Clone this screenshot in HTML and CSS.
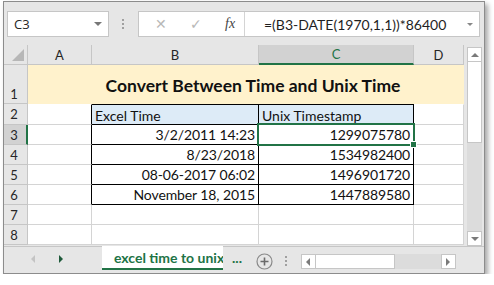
FILE: index.html
```html
<!DOCTYPE html>
<html lang="en">
<head>
    <meta charset="UTF-8">
    <title>excel time to unix</title>
    <link rel="stylesheet" href="styles.css">
</head>
<body>
    <div class="window">
        <div class="formula-bar">
            <div class="name-box">
                <span>C3</span>
                <span class="caret"></span>
            </div>
            <div class="grip"></div>
            <div class="formula-box">
                <div class="fx-buttons">
                    <span class="fx-btn">&#x2715;</span>
                    <span class="fx-btn">&#x2713;</span>
                    <span class="fx-label">fx</span>
                </div>
                <div class="formula">=(B3-DATE(1970,1,1))*86400</div>
                <span class="caret small"></span>
            </div>
        </div>

        <div class="sheet-area">
            <div class="grid">
                <div class="corner"><span class="corner-tri"></span></div>
                <div class="col-head">A</div>
                <div class="col-head">B</div>
                <div class="col-head active">C</div>
                <div class="col-head">D</div>

                <div class="row-head tall">1</div>
                <div class="cell title-fill"></div>
                <div class="cell title">Convert Between Time and Unix Time</div>
                <div class="cell title-fill last"></div>

                <div class="row-head">2</div>
                <div class="cell edge top-line"></div>
                <div class="cell t head top">Excel Time</div>
                <div class="cell t head top">Unix Timestamp</div>
                <div class="cell top-line"></div>

                <div class="row-head active">3</div>
                <div class="cell edge"></div>
                <div class="cell t num">3/2/2011 14:23</div>
                <div class="cell t num selected">1299075780<span class="handle"></span></div>
                <div class="cell"></div>

                <div class="row-head">4</div>
                <div class="cell edge"></div>
                <div class="cell t num">8/23/2018</div>
                <div class="cell t num">1534982400</div>
                <div class="cell"></div>

                <div class="row-head">5</div>
                <div class="cell edge"></div>
                <div class="cell t num">08-06-2017 06:02</div>
                <div class="cell t num">1496901720</div>
                <div class="cell"></div>

                <div class="row-head">6</div>
                <div class="cell edge"></div>
                <div class="cell t num">November 18, 2015</div>
                <div class="cell t num">1447889580</div>
                <div class="cell"></div>

                <div class="row-head">7</div>
                <div class="cell"></div>
                <div class="cell"></div>
                <div class="cell"></div>
                <div class="cell"></div>

                <div class="row-head">8</div>
                <div class="cell"></div>
                <div class="cell"></div>
                <div class="cell"></div>
                <div class="cell"></div>
            </div>

            <div class="vscroll">
                <div class="arrow-box"><span class="tri up"></span></div>
                <div class="vthumb"></div>
                <div class="vtrack"></div>
                <div class="arrow-box"><span class="tri down"></span></div>
            </div>
        </div>

        <div class="tab-bar">
            <div class="tab-nav">
                <span class="tri left faded"></span>
                <span class="tri right dark"></span>
            </div>
            <div class="sheet-tab">excel time to unix</div>
            <div class="more">...</div>
            <div class="add-sheet">
                <svg width="17" height="17" viewBox="0 0 17 17">
                    <circle cx="8.5" cy="8.5" r="7.5" fill="none" stroke="#8a8a8a" stroke-width="1.2"/>
                    <path d="M8.5 4.5v8M4.5 8.5h8" stroke="#6a6a6a" stroke-width="1.6"/>
                </svg>
            </div>
            <div class="grip tab-grip"></div>
            <div class="hscroll">
                <div class="arrow-box"><span class="tri left"></span></div>
                <div class="hthumb"></div>
                <div class="htrack"></div>
                <div class="arrow-box"><span class="tri right"></span></div>
            </div>
        </div>
    </div>
</body>
</html>
```

FILE: styles.css
```css
body {
    margin: 0;
    background: #ffffff;
    font-family: Lato, "Open Sans", sans-serif;
}

.window {
    box-sizing: border-box;
    width: 482px;
    height: 273px;
    margin: 1px 0 0 3px;
    background: #e6e6e6;
    border: 1px solid #8c8c8c;
    box-shadow: 3px 3px 5px rgba(0, 0, 0, 0.35);
    display: flex;
    flex-direction: column;
    overflow: hidden;
}

/* formula bar */
.formula-bar {
    height: 45px;
    display: flex;
    align-items: flex-start;
    padding: 9px 3px 0 3px;
    box-sizing: border-box;
}

.name-box {
    box-sizing: border-box;
    width: 102px;
    height: 26px;
    background: #fff;
    border: 1px solid #c6c6c6;
    display: flex;
    align-items: center;
    justify-content: space-between;
    padding: 0 6px 0 6px;
    font-family: "Open Sans", sans-serif;
    font-size: 13px;
    color: #262626;
}

.caret {
    width: 0;
    height: 0;
    border-left: 4px solid transparent;
    border-right: 4px solid transparent;
    border-top: 4px solid #777;
}

.caret.small {
    border-left-width: 3px;
    border-right-width: 3px;
    border-top: 3px solid #888;
    margin-right: 6px;
}

.grip {
    width: 2px;
    height: 11px;
    margin: 8px 14px 0 13px;
    background: repeating-linear-gradient(to bottom, #a0a0a0 0 2px, transparent 2px 4px);
}

.formula-box {
    box-sizing: border-box;
    flex: 1;
    height: 26px;
    margin-right: 1px;
    background: #fff;
    border: 1px solid #c6c6c6;
    display: flex;
    align-items: center;
}

.fx-buttons {
    width: 106px;
    display: flex;
    align-items: center;
    padding-left: 16px;
    box-sizing: border-box;
    border-right: 1px solid #d4d4d4;
    height: 100%;
}

.fx-btn {
    color: #b8b8b8;
    font-size: 14px;
    width: 35px;
    font-family: "DejaVu Sans", sans-serif;
}

.fx-label {
    font-family: "Liberation Serif", serif;
    font-style: italic;
    font-size: 14px;
    color: #444;
    margin-left: 0;
}

.formula {
    flex: 1;
    padding-left: 19px;
    font-size: 14px;
    color: #1f1f1f;
}

/* grid */
.sheet-area {
    display: flex;
    height: 201px;
    background: #e6e6e6;
}

.grid {
    display: grid;
    grid-template-columns: 24px 64px 167px 155px 50px;
    grid-template-rows: 20px 39px 21px 20px 20px 20px 20px 20px 20px;
    background: #fff;
    align-self: flex-start;
}

.corner,
.col-head,
.row-head {
    box-sizing: border-box;
    background: #e6e6e6;
    border-right: 1px solid #c6c6c6;
    border-bottom: 1px solid #c6c6c6;
    color: #262626;
    font-size: 13px;
}

.corner {
    position: relative;
}

.corner-tri {
    position: absolute;
    right: 3px;
    bottom: 3px;
    width: 0;
    height: 0;
    border-left: 12px solid transparent;
    border-bottom: 12px solid #b7b7b7;
}

.col-head {
    display: flex;
    align-items: center;
    justify-content: center;
}

.col-head.active {
    background: #d2d2d2;
    color: #217346;
    border-bottom: 2px solid #217346;
}

.row-head {
    display: flex;
    align-items: center;
    justify-content: center;
    padding-right: 3px;
}

.row-head.tall {
    align-items: flex-end;
    padding-bottom: 1px;
}

.row-head.active {
    background: #d2d2d2;
    border-right: 2px solid #217346;
    padding-right: 2px;
}

.cell {
    box-sizing: border-box;
    border-right: 1px solid #d4d4d4;
    border-bottom: 1px solid #d4d4d4;
    font-size: 14px;
    color: #111;
    display: flex;
    align-items: center;
    padding: 0 3px;
    white-space: nowrap;
}

.title-fill {
    background: #fff2cc;
    border-right-color: #fff2cc;
    border-bottom: none;
}

.title-fill.last {
    border-right: none;
}

.title {
    grid-column: span 2;
    background: #fff2cc;
    border: none;
    justify-content: center;
    font-weight: bold;
    font-size: 17.5px;
    padding-top: 2px;
}

.top-line {
    border-top: 1px solid #fff;
}

.edge {
    border-right-color: #000;
}

.t {
    border-right-color: #000;
    border-bottom-color: #000;
}

.t.top {
    border-top: 1px solid #000;
}

.t.head {
    background: #ddebf7;
    padding-top: 1px;
}

.num {
    justify-content: flex-end;
    letter-spacing: -0.1px;
}

.selected {
    position: relative;
}

.selected::after {
    content: "";
    position: absolute;
    left: -2px;
    top: -2px;
    right: -2px;
    bottom: -2px;
    border: 2px solid #217346;
}

.handle {
    position: absolute;
    right: -4px;
    bottom: -4px;
    width: 5px;
    height: 5px;
    background: #217346;
    border: 1px solid #fff;
    z-index: 1;
}

/* scrollbars */
.vscroll {
    width: 15px;
    margin: 2px 0 0 3px;
    height: 199px;
    display: flex;
    flex-direction: column;
}

.arrow-box {
    box-sizing: border-box;
    width: 15px;
    height: 15px;
    background: #fff;
    border: 1px solid #c6c6c6;
    display: flex;
    align-items: center;
    justify-content: center;
}

.vthumb {
    height: 80px;
    background: #fff;
    border: 1px solid #c6c6c6;
    border-top: none;
}

.vtrack {
    flex: 1;
    background: #dcdcdc;
}

.tri {
    width: 0;
    height: 0;
}

.tri.up {
    border-left: 4px solid transparent;
    border-right: 4px solid transparent;
    border-bottom: 4px solid #7a7a7a;
}

.tri.down {
    border-left: 4px solid transparent;
    border-right: 4px solid transparent;
    border-top: 4px solid #7a7a7a;
}

.tri.left {
    border-top: 4px solid transparent;
    border-bottom: 4px solid transparent;
    border-right: 4px solid #7a7a7a;
}

.tri.right {
    border-top: 4px solid transparent;
    border-bottom: 4px solid transparent;
    border-left: 4px solid #7a7a7a;
}

.tri.faded {
    border-right-color: #c4c4c4;
}

.tri.dark {
    border-left-color: #1e5a3a;
}

/* sheet tabs */
.tab-bar {
    display: flex;
    align-items: flex-start;
    height: 26px;
    border-top: 1px solid #c6c6c6;
}

.tab-nav {
    width: 98px;
    height: 24px;
    display: flex;
    align-items: center;
    padding-left: 27px;
    gap: 24px;
    box-sizing: border-box;
}

.sheet-tab {
    box-sizing: border-box;
    width: 121px;
    height: 24px;
    margin-top: -1px;
    background: #fff;
    border-bottom: 2px solid #217346;
    color: #217346;
    font-weight: bold;
    font-size: 14px;
    padding-left: 12px;
    white-space: nowrap;
    overflow: hidden;
    display: flex;
    align-items: center;
}

.more {
    color: #217346;
    font-weight: bold;
    font-size: 14px;
    margin-left: 9px;
    line-height: 22px;
}

.add-sheet {
    margin: 6px 0 0 14px;
}

.tab-grip {
    margin: 9px 14px 0 12px;
}

.hscroll {
    margin-top: 7px;
    width: 155px;
    height: 15px;
    display: flex;
}

.hthumb {
    width: 78px;
    background: #fff;
    border: 1px solid #c6c6c6;
    border-left: none;
}

.htrack {
    flex: 1;
    background: #dcdcdc;
}
```
